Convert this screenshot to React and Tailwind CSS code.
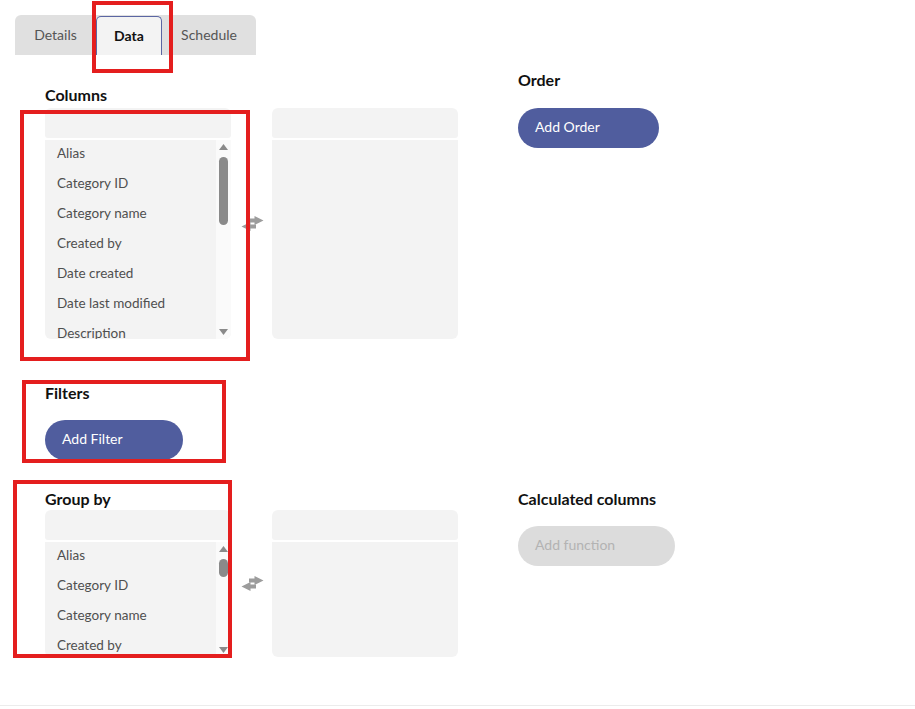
import React from "react";

const font = { fontFamily: "Lato, 'Open Sans', sans-serif" };

function Tri({ down }) {
  return (
    <svg width="9" height="6" viewBox="0 0 9 6" className="block">
      {down ? <path d="M0 0 H9 L4.5 6 Z" fill="#8a8a8a" /> : <path d="M0 6 H9 L4.5 0 Z" fill="#8a8a8a" />}
    </svg>
  );
}

function Swap() {
  return (
    <svg width="23" height="15" viewBox="0 0 23 15" className="block">
      <path d="M8 2.5 H13.5 V0 L22.5 4.5 L13.5 9 V6.5 H8 Z" fill="#9c9c9c" />
      <path d="M15 8.5 H9.5 V6 L0.5 10.5 L9.5 15 V12.5 H15 Z" fill="#9c9c9c" />
    </svg>
  );
}

function ListBox({ items, listH, thumbH }) {
  return (
    <div className="flex flex-col w-[186px] gap-[2px]">
      <div className="h-[30px] bg-[#f3f3f3] rounded-t-[6px] rounded-b-[3px]" />
      <div className="flex bg-[#f3f3f3] rounded-b-[6px] overflow-hidden" style={{ height: listH }}>
        <div className="flex-1 flex flex-col overflow-hidden pl-[12px]">
          {items.map((t) => (
            <div key={t} className="h-[30px] shrink-0 flex items-start pt-[4px] text-[13.5px] leading-[18px] text-[#4f4f4f]">
              {t}
            </div>
          ))}
        </div>
        <div className="w-[15px] bg-[#fafafa] flex flex-col items-center pt-[4px] pb-[4px]">
          <Tri />
          <div className="w-[9px] rounded-full bg-[#8a8a8a] mt-[7px]" style={{ height: thumbH }} />
          <div className="flex-1" />
          <Tri down />
        </div>
      </div>
    </div>
  );
}

function EmptyBox({ listH }) {
  return (
    <div className="flex flex-col w-[186px] gap-[2px]">
      <div className="h-[30px] bg-[#f3f3f3] rounded-t-[6px] rounded-b-[3px]" />
      <div className="bg-[#f3f3f3] rounded-b-[6px]" style={{ height: listH }} />
    </div>
  );
}

function Widget({ items, listH, thumbH }) {
  return (
    <div className="flex items-center">
      <ListBox items={items} listH={listH} thumbH={thumbH} />
      <div className="pl-[10px] pr-[8px]">
        <Swap />
      </div>
      <EmptyBox listH={listH} />
    </div>
  );
}

function Heading({ children }) {
  return <div className="text-[16px] leading-[20px] font-bold text-[#111]">{children}</div>;
}

const cols = ["Alias", "Category ID", "Category name", "Created by", "Date created", "Date last modified", "Description"];
const groups = ["Alias", "Category ID", "Category name", "Created by"];

export default function App() {
  return (
    <div className="relative w-[915px] h-[709px] bg-white overflow-hidden" style={font}>
      <div className="h-[706px] border-b border-[#ececec]">
        {/* Tabs */}
        <div className="ml-[15px] pt-[15px] flex">
          <div className="flex h-[40px] bg-[#e0e0e0] rounded-t-[6px] items-end">
            <div className="w-[81px] h-[40px] flex items-center justify-center pb-[2px] text-[14px] text-[#555]">Details</div>
            <div className="w-[66px] h-[39px] flex items-center justify-center pb-[1px] text-[14px] font-bold text-[#111] bg-[#f3f3f3] border-[1.5px] border-b-0 border-[#5b66a3] rounded-t-[5px]">
              Data
            </div>
            <div className="w-[94px] h-[40px] flex items-center justify-center pb-[2px] text-[14px] text-[#555]">Schedule</div>
          </div>
        </div>

        {/* Row 1 */}
        <div className="flex pl-[45px] mt-[15px]">
          <div className="w-[413px] pt-[15px]">
            <Heading>Columns</Heading>
            <div className="mt-[3px]">
              <Widget items={cols} listH={199} thumbH={68} />
            </div>
          </div>
          <div className="ml-[60px]">
            <Heading>Order</Heading>
            <button className="mt-[18px] w-[141px] h-[40px] rounded-full bg-[#505d9e] text-white text-[14px] text-left pl-[17px] pb-[3px]">
              Add Order
            </button>
          </div>
        </div>

        {/* Filters */}
        <div className="pl-[45px] mt-[44px]">
          <Heading>Filters</Heading>
          <button className="mt-[17px] w-[138px] h-[40px] rounded-full bg-[#505d9e] text-white text-[14px] text-left pl-[17px] pb-[3px]">
            Add Filter
          </button>
        </div>

        {/* Row 3 */}
        <div className="flex pl-[45px] mt-[29px]">
          <div className="w-[413px]">
            <Heading>Group by</Heading>
            <div className="mt-[1px]">
              <Widget items={groups} listH={115} thumbH={18} />
            </div>
          </div>
          <div className="ml-[60px]">
            <Heading>Calculated columns</Heading>
            <button className="mt-[17px] w-[157px] h-[40px] rounded-full bg-[#dcdcdc] text-[#b3b3b3] text-[14px] text-left pl-[17px] pb-[3px]">
              Add function
            </button>
          </div>
        </div>
      </div>

      {/* Annotation boxes */}
      <div className="absolute left-[92px] top-[1px] w-[81px] h-[72px] border-4 border-[#e41e1e]" />
      <div className="absolute left-[20px] top-[110px] w-[230px] h-[251px] border-4 border-[#e41e1e]" />
      <div className="absolute left-[22px] top-[380px] w-[204px] h-[83px] border-4 border-[#e41e1e]" />
      <div className="absolute left-[13px] top-[480px] w-[219px] h-[178px] border-4 border-[#e41e1e]" />
    </div>
  );
}
